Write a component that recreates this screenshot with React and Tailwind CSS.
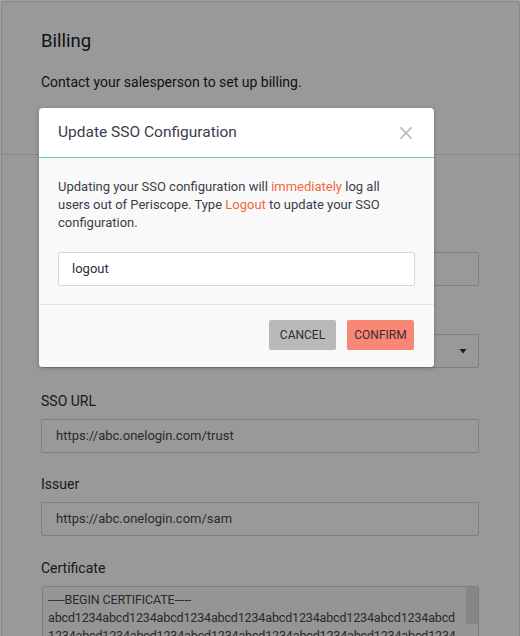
import React from "react"

const certLines = [
  "-----BEGIN CERTIFICATE-----",
  "abcd1234abcd1234abcd1234abcd1234abcd1234abcd1234abcd1234abcd",
  "1234abcd1234abcd1234abcd1234abcd1234abcd1234abcd1234abcd1234",
  "abcd1234abcd1234abcd1234abcd1234abcd1234abcd1234abcd1234abcd",
  "1234abcd1234abcd1234abcd1234abcd1234abcd1234abcd1234abcd1234",
]

function Field({ label, className = "", children }) {
  return (
    <div className={className}>
      <div className="text-[14px] leading-[20px] text-[#2a2a2a] mb-[8px]">{label}</div>
      {children}
    </div>
  )
}

function TextInput({ value }) {
  return (
    <div className="w-[438px] h-[34px] border border-[#cacaca] rounded-[2px] bg-[#f3f3f3] px-[14px] flex items-center text-[13px] text-[#444]">
      {value}
    </div>
  )
}

function CloseIcon() {
  return (
    <svg width="12" height="12" viewBox="0 0 12 12" fill="none">
      <path d="M0.8 0.8 L11.2 11.2 M11.2 0.8 L0.8 11.2" stroke="#b5b5b5" strokeWidth="1.6" strokeLinecap="round" />
    </svg>
  )
}

function ConfirmModal() {
  return (
    <div className="w-[395px] rounded-[4px] overflow-hidden bg-white shadow-[0_1px_4px_rgba(0,0,0,0.25)]">
      <div className="h-[50px] border-b border-[#63c5bb] flex items-center justify-between pl-[19px] pr-[22px]">
        <span className="text-[15.5px] text-[#3c3d4a]">Update SSO Configuration</span>
        <CloseIcon />
      </div>

      <div className="bg-[#f9f9f9] px-[19px] pt-[20px] pb-[18px]">
        <p className="text-[13px] leading-[18px] text-[#3c3d4a]">
          Updating your SSO configuration will <span className="text-[#f26a3c]">immediately</span> log all
          <br />
          users out of Periscope. Type <span className="text-[#f26a3c]">Logout</span> to update your SSO
          <br />
          configuration.
        </p>
        <div className="mt-[20px] h-[34px] border border-[#d4d6da] rounded-[2px] bg-white px-[13px] flex items-center text-[13px] text-[#2e2e38]">
          logout
        </div>
      </div>

      <div className="bg-[#f9f9f9] border-t border-[#e0e4ed] pt-[15px] pb-[17px] pr-[20px] flex justify-end gap-[11px]">
        <button className="w-[67px] h-[30px] rounded-[2px] bg-[#b9b9b9] text-[12px] uppercase text-[#2c2d3a]">
          Cancel
        </button>
        <button className="w-[67px] h-[30px] rounded-[2px] bg-[#fa8775] text-[12px] uppercase text-[#3a2c30]">
          Confirm
        </button>
      </div>
    </div>
  )
}

export default function App() {
  return (
    <div className="relative h-[636px] overflow-hidden bg-white font-[Roboto,sans-serif]">
      <div className="ml-[1px] mt-[1px] w-[519px] min-h-[700px] border border-[#d8d8d8] rounded-t-[4px] bg-[#f3f3f3]">
        <section className="pl-[39px] pt-[27px] pb-[62px] border-b border-[#d8d8d8]">
          <h2 className="text-[18.5px] leading-[24px] text-[#1b1b1b]">Billing</h2>
          <p className="mt-[19px] text-[14px] leading-[20px] text-[#1b1b1b]">
            Contact your salesperson to set up billing.
          </p>
        </section>

        <section className="pl-[39px] pt-[26px]">
          <h2 className="text-[18.5px] leading-[24px] text-[#1b1b1b]">Single Sign-On</h2>

          <Field label="Login URL" className="mt-[19px]">
            <TextInput value="https://abc.onelogin.com/login" />
          </Field>

          <Field label="Provider" className="mt-[20px]">
            <div className="w-[438px] h-[34px] border border-[#cacaca] rounded-[2px] bg-[#f3f3f3] pl-[14px] pr-[11px] flex items-center justify-between text-[13px] text-[#444]">
              <span>OneLogin</span>
              <svg width="8" height="5" viewBox="0 0 8 5">
                <path d="M0.5 0 H7.5 L4 4.5 Z" fill="#2e2e2e" />
              </svg>
            </div>
          </Field>

          <Field label="SSO URL" className="mt-[23px]">
            <TextInput value="https://abc.onelogin.com/trust" />
          </Field>

          <Field label="Issuer" className="mt-[21px]">
            <TextInput value="https://abc.onelogin.com/sam" />
          </Field>

          <Field label="Certificate" className="mt-[22px]">
            <div className="ml-[1px] w-[437px] h-[120px] border border-[#cacaca] rounded-[2px] bg-[#ededed] flex overflow-hidden">
              <div className="flex-1 pl-[5px] pt-[4px] text-[12.5px] leading-[18px] tracking-[-0.15px] text-[#444] whitespace-pre">
                {certLines.map((line, i) => (
                  <div key={i}>{line}</div>
                ))}
              </div>
              <div className="w-[12px]">
                <div className="h-[37px] bg-[#d6d6d6]" />
              </div>
            </div>
          </Field>
        </section>
      </div>

      <div className="absolute inset-0 bg-black/[0.37] pt-[108px] pl-[39px]">
        <ConfirmModal />
      </div>
    </div>
  )
}
